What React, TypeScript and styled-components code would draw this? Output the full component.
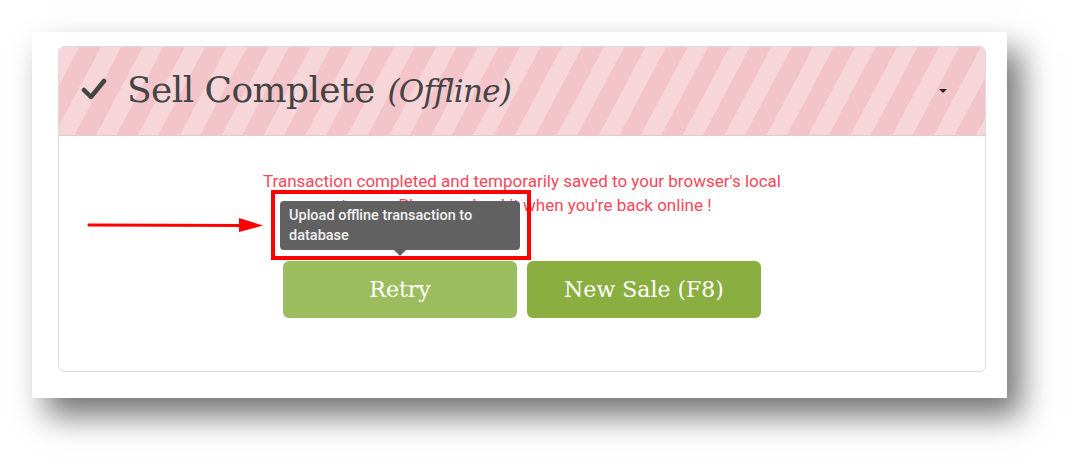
import { FC } from 'react';
import styled, { createGlobalStyle } from 'styled-components';

const GlobalStyle = createGlobalStyle`
    html, body {
        margin: 0;
        padding: 0;
        background: #ffffff;
    }
    body {
        font-family: Roboto, "Liberation Sans", sans-serif;
    }
`;

const Page = styled.div`
    width: 1072px;
    height: 464px;
    padding: 32px 0 0 32px;
    box-sizing: border-box;
`;

const Frame = styled.div`
    width: 975px;
    height: 366px;
    box-sizing: border-box;
    padding: 14px 21px 26px 26px;
    background: #ffffff;
    box-shadow: 14px 18px 30px rgba(0, 0, 0, 0.55);
`;

const Panel = styled.div`
    position: relative;
    height: 100%;
    display: flex;
    flex-direction: column;
    border: 1px solid #dcdcdc;
    border-radius: 6px;
    overflow: hidden;
    box-sizing: border-box;
`;

const Header = styled.div`
    height: 88px;
    flex-shrink: 0;
    display: flex;
    align-items: center;
    padding: 0 38px 0 22px;
    border-bottom: 1px solid #e6c9cc;
    background: repeating-linear-gradient(
        118deg,
        #f7d6da 0px,
        #f7d6da 18px,
        #f4c4cb 18px,
        #f4c4cb 37px
    );
`;

const Title = styled.h2`
    flex: 1;
    margin: 0 0 4px;
    display: flex;
    align-items: center;
    gap: 20px;
    font-family: "DejaVu Serif", serif;
    font-weight: 400;
    font-size: 36px;
    color: #444444;
    letter-spacing: -0.6px;
`;

const Sub = styled.em`
    font-size: 31px;
    margin-left: 2px;
    letter-spacing: -0.8px;
`;

const Caret = styled.span`
    width: 0;
    height: 0;
    border-left: 4px solid transparent;
    border-right: 4px solid transparent;
    border-top: 4px solid #222;
`;

const Body = styled.div`
    flex: 1;
    display: flex;
    flex-direction: column;
    align-items: center;
    padding-top: 33px;
`;

const Message = styled.p`
    margin: 0;
    max-width: 560px;
    text-align: center;
    font-size: 17px;
    line-height: 24px;
    color: #f6475a;
`;

const Actions = styled.div`
    display: flex;
    gap: 10px;
    margin-top: 44px;
`;

const Button = styled.button<{ $tone: string }>`
    position: relative;
    width: 234px;
    height: 57px;
    border: none;
    border-radius: 6px;
    background: ${p => p.$tone};
    color: #ffffff;
    font-family: "DejaVu Serif", serif;
    font-size: 22px;
    cursor: pointer;
`;

const Tooltip = styled.div`
    position: absolute;
    left: -3px;
    bottom: 68px;
    width: 240px;
    box-sizing: border-box;
    padding: 5px 9px 4px;
    border-radius: 4px;
    background: #616161;
    color: #f2f2f2;
    font-family: Roboto, sans-serif;
    font-weight: 500;
    font-size: 14.5px;
    line-height: 20px;
    text-align: left;
    &::after {
        content: '';
        position: absolute;
        left: 50%;
        bottom: -6px;
        margin-left: -6px;
        border-left: 6px solid transparent;
        border-right: 6px solid transparent;
        border-top: 6px solid #616161;
    }
`;

const Highlight = styled.div`
    position: absolute;
    left: -12px;
    top: -71px;
    width: 260px;
    height: 70px;
    box-sizing: border-box;
    border: 4px solid #ff0000;
    pointer-events: none;
`;

const Pointer = styled.svg`
    position: absolute;
    left: 28px;
    top: 168px;
`;

export default function App() {
    return (
        <>
            <GlobalStyle />
            <Page>
                <Frame>
                    <Panel>
                        <Header>
                            <Title>
                                <svg width="26" height="22" viewBox="0 0 26 22">
                                    <polyline points="3,12 10,19 23,3" fill="none" stroke="#444444" strokeWidth="4.5" strokeLinecap="round" strokeLinejoin="round" />
                                </svg>
                                <span>Sell Complete <Sub>(Offline)</Sub></span>
                            </Title>
                            <Caret />
                        </Header>
                        <Body>
                            <Message>
                                Transaction completed and temporarily saved to your browser's local storage. Please upload it when you're back online !
                            </Message>
                            <Actions>
                                <Button $tone="#9cbd5d">
                                    Retry
                                    <Tooltip>Upload offline transaction to database</Tooltip>
                                    <Highlight />
                                </Button>
                                <Button $tone="#8aae40">New Sale (F8)</Button>
                            </Actions>
                        </Body>
                        <Pointer width="180" height="20" viewBox="0 0 180 20">
                            <line x1="2" y1="10" x2="160" y2="10.5" stroke="#ff0000" strokeWidth="3" strokeLinecap="round" />
                            <polygon points="152,3 176,10.5 152,17" fill="#ff0000" />
                        </Pointer>
                    </Panel>
                </Frame>
            </Page>
        </>
    );
}
